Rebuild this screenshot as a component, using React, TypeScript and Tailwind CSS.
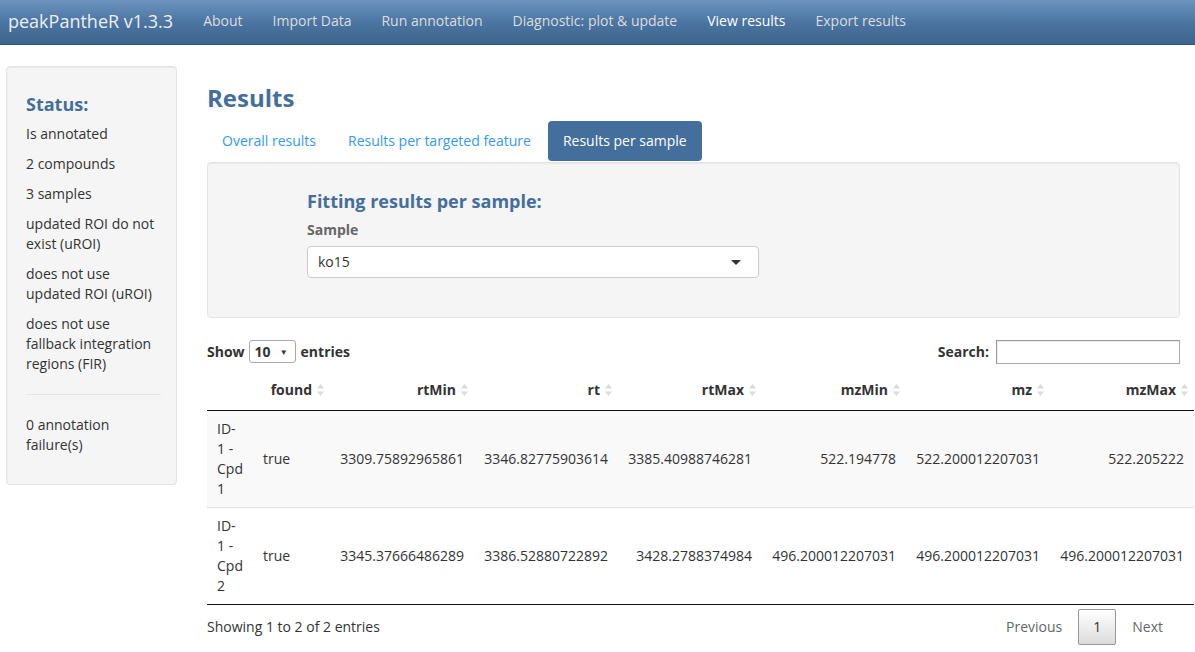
import React from 'react';

const navItems = ['About', 'Import Data', 'Run annotation', 'Diagnostic: plot & update', 'View results', 'Export results'];

const statusLines = [
  'Is annotated',
  '2 compounds',
  '3 samples',
  'updated ROI do not exist (uROI)',
  'does not use updated ROI (uROI)',
  'does not use fallback integration regions (FIR)',
];

const columns = ['rtMin', 'rt', 'rtMax', 'mzMin', 'mz', 'mzMax'];

const rows = [
  {
    id: ['ID-', '1 -', 'Cpd', '1'],
    found: 'true',
    values: ['3309.75892965861', '3346.82775903614', '3385.40988746281', '522.194778', '522.200012207031', '522.205222'],
  },
  {
    id: ['ID-', '1 -', 'Cpd', '2'],
    found: 'true',
    values: ['3345.37666486289', '3386.52880722892', '3428.2788374984', '496.200012207031', '496.200012207031', '496.200012207031'],
  },
];

function SortIcon() {
  return (
    <svg width="9" height="15" viewBox="0 0 9 15" className="absolute right-[5px] top-1/2 -translate-y-1/2">
      <polygon points="4.5,1.5 8,6 1,6" fill="#dcdcdc" />
      <polygon points="1,9 8,9 4.5,13.5" fill="#dcdcdc" />
    </svg>
  );
}

function HeaderCell({ label }: { label: string }) {
  return (
    <th className="relative pl-[10px] pr-[18px] py-[10px] text-right font-bold border-b border-[#111]">
      {label}
      <SortIcon />
    </th>
  );
}

export default function App() {
  return (
    <div className="w-[1195px] h-[652px] overflow-hidden bg-white font-['Open_Sans',sans-serif] text-[14px] leading-[20px] text-[#333]">
      {/* Navbar */}
      <div className="h-[45px] pb-[2px] flex items-center bg-linear-to-b from-[#6d94bf] via-[#4b75a2] to-[#3e648d] border-b border-[#345578]">
        <span className="pl-[8px] pr-[15px] text-[18px] text-[#eee]">peakPantheR v1.3.3</span>
        {navItems.map((item) => (
          <span key={item} className={`px-[15px] ${item === 'View results' ? 'text-white' : 'text-[#ddd]'}`}>
            {item}
          </span>
        ))}
      </div>

      <div className="flex items-start">
        {/* Sidebar */}
        <div className="ml-[6px] mt-[21px] w-[171px] shrink-0 bg-[#f5f5f5] border border-[#e3e3e3] rounded-[4px] pl-[19px] pr-[15px] pt-[27px] pb-[19px] shadow-[inset_0_1px_1px_rgba(0,0,0,0.05)]">
          <h4 className="text-[18px] leading-[20px] font-bold text-[#446e9b] mb-[10px]">Status:</h4>
          {statusLines.map((line) => (
            <p key={line} className="mb-[10px]">{line}</p>
          ))}
          <hr className="mt-[20px] mb-[20px] border-t border-[#e6e6e6]" />
          <p className="mb-[10px]">0 annotation failure(s)</p>
        </div>

        {/* Main */}
        <div className="ml-[30px] w-[988px] shrink-0">
          <h3 className="mt-[39px] mb-[9px] text-[24px] leading-[28px] font-bold text-[#446e9b]">Results</h3>

          <div className="flex gap-[2px]">
            <span className="px-[15px] py-[10px] text-[#3399f3]">Overall results</span>
            <span className="px-[15px] py-[10px] text-[#3399f3]">Results per targeted feature</span>
            <span className="px-[15px] py-[10px] rounded-[4px] bg-[#446e9b] text-white">Results per sample</span>
          </div>

          <div className="mt-[1px] w-[973px] bg-[#f5f5f5] border border-[#e3e3e3] rounded-[4px] pt-[28px] pb-[39px] shadow-[inset_0_1px_1px_rgba(0,0,0,0.05)]">
            <div className="ml-[99px]">
              <h4 className="text-[18px] leading-[20px] font-bold text-[#446e9b] mb-[9px]">Fitting results per sample:</h4>
              <div className="font-bold text-[#666] mb-[6px]">Sample</div>
              <div className="w-[452px] h-[32px] bg-white border border-[#ccc] rounded-[4px] flex items-center justify-between pl-[10px] pr-[17px]">
                <span>ko15</span>
                <span className="w-0 h-0 border-l-[5px] border-r-[5px] border-t-[5px] border-l-transparent border-r-transparent border-t-[#333]" />
              </div>
            </div>
          </div>

          {/* DataTable controls */}
          <div className="mt-[21px] w-[973px] h-[25px] flex items-center justify-between font-bold">
            <div className="flex items-center">
              <span>Show</span>
              <span className="ml-[4px] w-[47px] h-[23px] border border-[#aaa] rounded-[3px] bg-white flex items-center justify-between pl-[5px] pr-[7px]">
                <span>10</span>
                <span className="text-[8px] leading-none">▼</span>
              </span>
              <span className="ml-[5px]">entries</span>
            </div>
            <div className="flex items-center">
              <span>Search:</span>
              <span className="ml-[7px] w-[184px] h-[24px] bg-white border border-[#aaa] border-t-[#999] border-l-[#999] shadow-[inset_1px_1px_1px_rgba(0,0,0,0.08)]" />
            </div>
          </div>

          <table className="mt-[6px] w-[987px] table-fixed border-collapse">
            <colgroup>
              <col className="w-[46px]" />
              <col className="w-[77px]" />
              {columns.map((c) => (
                <col key={c} className="w-[144px]" />
              ))}
            </colgroup>
            <thead>
              <tr>
                <th className="py-[10px] border-b border-[#111]" />
                <HeaderCell label="found" />
                {columns.map((c) => (
                  <HeaderCell key={c} label={c} />
                ))}
              </tr>
            </thead>
            <tbody>
              {rows.map((row, i) => (
                <tr key={i} className={i === 0 ? 'bg-[#f9f9f9]' : 'bg-white border-t border-[#ddd] border-b border-b-[#111]'}>
                  <td className="px-[10px] py-[8px] text-left align-middle">
                    {row.id.map((part, j) => (
                      <div key={j} className="whitespace-nowrap">{part}</div>
                    ))}
                  </td>
                  <td className="px-[10px] py-[8px] text-left align-middle">{row.found}</td>
                  {row.values.map((v, j) => (
                    <td key={j} className="px-[10px] py-[8px] text-right align-middle whitespace-nowrap">{v}</td>
                  ))}
                </tr>
              ))}
            </tbody>
          </table>

          {/* Footer */}
          <div className="mt-[4px] w-[973px] h-[35px] pr-[3px] flex items-center justify-between">
            <span>Showing 1 to 2 of 2 entries</span>
            <div className="flex items-center">
              <span className="px-[14px] py-[7px] text-[#666]">Previous</span>
              <span className="ml-[2px] px-[14px] py-[7px] rounded-[2px] border border-[#979797] bg-linear-to-b from-white to-[#dcdcdc] text-[#333]">1</span>
              <span className="ml-[2px] px-[14px] py-[7px] text-[#666]">Next</span>
            </div>
          </div>
        </div>
      </div>
    </div>
  );
}
